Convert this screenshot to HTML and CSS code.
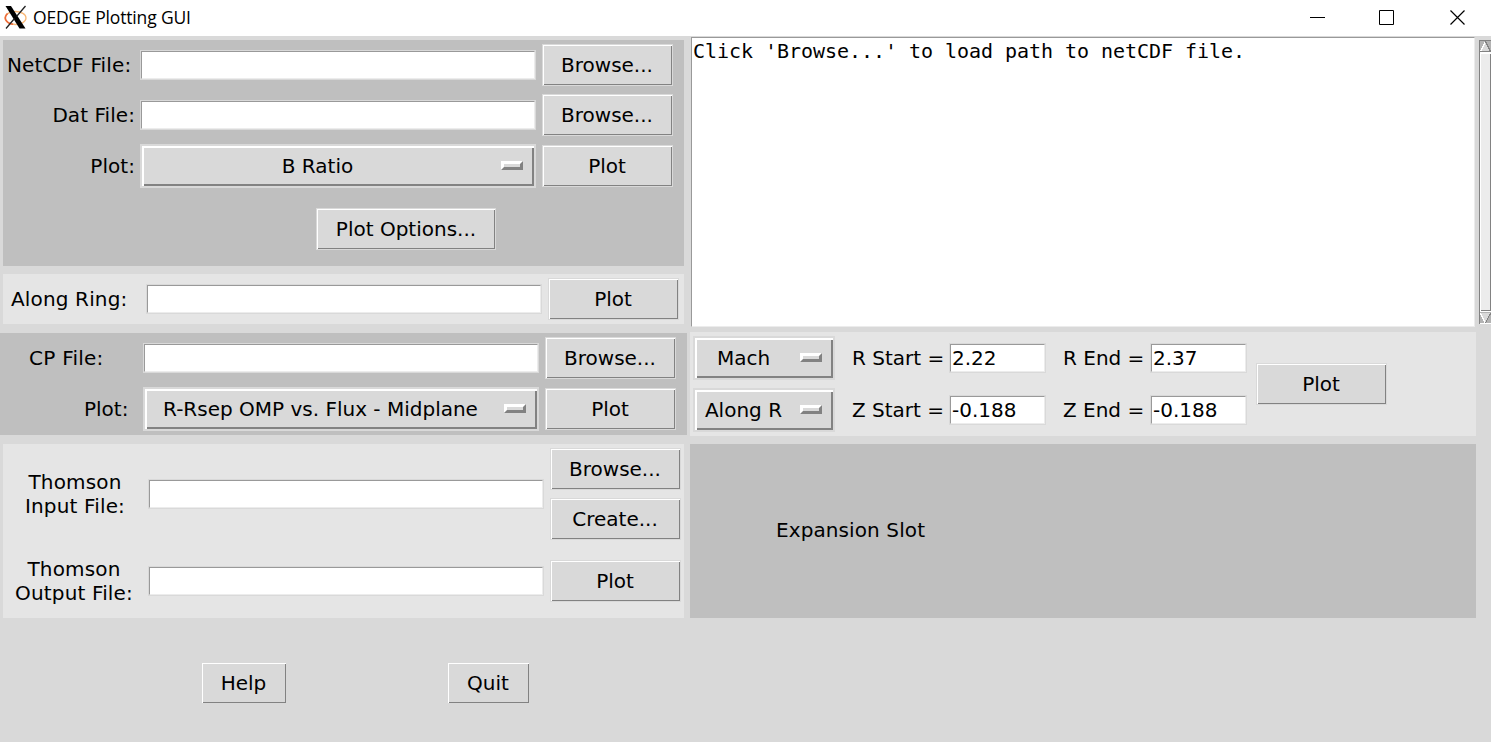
FILE: index.html
```html
<!DOCTYPE html>
<html lang="en">
<head>
<meta charset="utf-8">
<title>OEDGE Plotting GUI</title>
<link rel="stylesheet" href="styles.css">
</head>
<body>
<header class="titlebar">
  <svg class="logo" width="24" height="24" viewBox="0 0 24 24">
    <ellipse cx="11.500" cy="13" rx="10.500" ry="6.500" fill="none" stroke="#f9b878" stroke-width="1.300"/>
    <path d="M3.500 8.500C-1 13 2 18 9 19.300" fill="none" stroke="#ec6a3c" stroke-width="1.600"/>
    <path d="M1.500 1h5.500l14.500 22.500h-6z" fill="#000"/>
    <path d="M21.500 1L12.500 11.500M10.500 13.500L2 23.500" stroke="#222" stroke-width="1.300"/>
  </svg>
  <span class="caption">OEDGE Plotting GUI</span>
  <svg class="controls" width="156" height="16" viewBox="0 0 156 16" fill="none" stroke="#000">
    <path d="M0 7.500h15M69.500 .5h14v14h-14z"/>
    <path d="M140.500 .5l14 14M154.500 .5l-14 14" stroke-width="1.200"/>
  </svg>
</header>
<main class="content">
  <section class="left">
    <div class="panel dark files">
      <label class="netcdf">NetCDF File:</label><input class="entry"><button class="btn">Browse...</button>
      <label class="dat">Dat File:</label><input class="entry"><button class="btn">Browse...</button>
      <label class="dat">Plot:</label><div class="option"><span>B Ratio</span><i></i></div><button class="btn">Plot</button>
      <button class="btn options">Plot Options...</button>
    </div>
    <div class="panel light ring">
      <label>Along Ring:</label><input class="entry"><button class="btn">Plot</button>
    </div>
    <div class="panel dark cp">
      <label class="cpfile">CP File:</label><input class="entry"><button class="btn">Browse...</button>
      <label class="cpplot">Plot:</label><div class="option"><span>R-Rsep OMP vs. Flux - Midplane</span><i></i></div><button class="btn">Plot</button>
    </div>
    <div class="panel light thomson">
      <label class="tin">Thomson<br>Input File:</label><input class="entry">
      <div class="stack"><button class="btn">Browse...</button><button class="btn">Create...</button></div>
      <label class="tout">Thomson<br>Output File:</label><input class="entry"><button class="btn">Plot</button>
    </div>
    <div class="actions">
      <button class="btn help">Help</button><button class="btn quit">Quit</button>
    </div>
  </section>
  <section class="right">
    <div class="console">
      <div class="log">Click 'Browse...' to load path to netCDF file.</div>
      <svg class="scroll" width="12" height="285" viewBox="0 0 12 285" shape-rendering="crispEdges">
        <path fill="#b3b3b3" d="M0 0h12v285H0z"/>
        <path fill="#828282" d="M0 0h12v1H0zM0 0h1v285H0z"/>
        <path fill="#d9d9d9" d="M6.500 1L12 12H1z"/>
        <path fill="none" stroke="#fff" stroke-width="1.300" d="M1.500 11.500L6.500 1.500"/>
        <path fill="none" stroke="#828282" d="M6.500 1.500L11.500 11.500H1"/>
        <path fill="#fff" d="M1 12h11v260H1z"/>
        <path fill="#ececec" d="M2 14h9v256H2z"/>
        <path fill="#828282" d="M11 14h1v257H11zM2 270h10v1H2z"/>
        <path fill="#d9d9d9" d="M1 273h11L6.500 283z"/>
        <path fill="none" stroke="#fff" stroke-width="1.300" d="M1.500 273.500L6.500 283"/>
        <path fill="none" stroke="#828282" d="M6.500 283L11.500 273.500"/>
        <path fill="#fff" d="M1 283h11v1H1z"/>
        <path fill="#d9d9d9" d="M0 284h12v1H0z"/>
      </svg>
    </div>
    <div class="panel light probe">
      <div class="option"><span>Mach</span><i></i></div>
      <label class="start">R Start =</label><input class="entry" value="2.22">
      <label class="end">R End =</label><input class="entry" value="2.37">
      <button class="btn plot">Plot</button>
      <div class="option"><span>Along R</span><i></i></div>
      <label class="start">Z Start =</label><input class="entry" value="-0.188">
      <label class="end">Z End =</label><input class="entry" value="-0.188">
    </div>
    <div class="panel dark expansion">Expansion Slot</div>
  </section>
</main>
</body>
</html>
```
FILE: styles.css
```css
* { box-sizing: border-box; }
body {
  margin: 0;
  width: 1491px;
  height: 742px;
  overflow: hidden;
  background: #d9d9d9;
  color: #000;
  font: 20px/24px "DejaVu Sans", sans-serif;
}
.titlebar {
  display: flex;
  height: 36px;
  background: #fff;
  padding-left: 4px;
}
.logo { margin-top: 5px; flex: none; }
.caption {
  margin-left: 5px;
  font: 17.500px/35px "Open Sans", sans-serif;
  letter-spacing: -0.150px;
  white-space: nowrap;
}
.controls { margin: 10px 25px 0 auto; flex: none; }

.content { display: flex; gap: 3px; }
.left { width: 687px; padding-top: 4px; flex: none; }
.right { width: 801px; flex: none; }

.panel { display: grid; align-items: center; align-content: start; }
.dark { background: #bfbfbf; }
.light { background: #e5e5e5; }
label { white-space: nowrap; }

.entry {
  width: 100%;
  height: 28px;
  margin: 0;
  padding: 0 1px;
  border: 1px solid;
  border-color: #999 #ececec #ececec #999;
  border-radius: 0;
  outline: 1px solid #d9d9d9;
  outline-offset: 0;
  background: #fff;
  color: #000;
  font: inherit;
}
.btn {
  height: 42px;
  margin: 0;
  padding: 0 1px 0 0;
  border: 1px solid #d9d9d9;
  border-radius: 0;
  background: #d9d9d9;
  box-shadow: inset 1px 1px #fff, inset -1px -1px #828282;
  color: #000;
  font: inherit;
}
.option {
  display: flex;
  align-items: center;
  height: 44px;
  padding-right: 11px;
  border: 2px solid #d9d9d9;
  background: #d9d9d9;
  box-shadow: inset 2px 2px #fff, inset -2px -2px #828282;
}
.option span { flex: 1; padding-right: 8px; text-align: center; white-space: nowrap; }
.option i {
  width: 22px;
  height: 9px;
  margin-bottom: 1px;
  border: solid;
  border-width: 3px;
  border-color: #fff #828282 #828282 #fff;
}

.files, .ring, .thomson { width: 681px; margin-left: 3px; }
.files .entry, .ring .entry, .cp .entry, .thomson .entry { width: 394px; margin: 0 1px; }

.files {
  height: 226px;
  grid-template-columns: 137px 396px 131px;
  grid-template-rows: 42px 42px 44px 42px;
  gap: 8px 0;
  padding-top: 4px;
}
.files .btn, .ring .btn, .cp .btn { margin-left: 6px; width: 131px; }
.netcdf { padding-left: 4px; letter-spacing: 0.150px; }
.dat { padding-right: 5px; text-align: right; letter-spacing: 0.060px; }
.files .options { grid-column: 2; width: 180px; margin: 12px 0 0 176px; padding: 0; align-self: start; }

.ring {
  height: 50px;
  margin-top: 8px;
  padding-top: 4px;
  grid-template-columns: 143px 396px 137px;
}
.ring label { padding-left: 8px; letter-spacing: 0.150px; }

.cp {
  height: 102px;
  margin-top: 9px;
  padding-top: 4px;
  grid-template-columns: 143px 396px 137px;
  grid-template-rows: 42px 44px;
  row-gap: 8px;
}
.cpfile { padding-left: 29px; letter-spacing: 0.250px; }
.cpplot { padding-left: 84px; }

.thomson {
  height: 174px;
  margin-top: 9px;
  padding-top: 4px;
  grid-template-columns: 145px 396px 137px;
  row-gap: 17px;
}
.stack { display: grid; gap: 8px; }
.thomson .btn { margin-left: 6px; width: 131px; }
.thomson label { text-align: center; letter-spacing: 0.150px; }
.tin { padding-right: 1px; }
.tout { padding-right: 3px; }

.actions { display: flex; gap: 160px; padding: 44px 0 0 201px; }
.help { width: 86px; }
.quit { width: 83px; }

.console { display: flex; height: 296px; padding-top: 1px; }
.log {
  width: 784px;
  height: 290px;
  margin-left: 1px;
  padding: 1px;
  border: 1px solid;
  border-color: #999 #ececec #ececec #999;
  background: #fff;
  font-family: "DejaVu Sans Mono", monospace;
  letter-spacing: -0.041px;
}
.scroll { margin: 3px 0 0 4px; flex: none; }

.probe {
  width: 786px;
  height: 104px;
  padding: 4px 0 0 3px;
  grid-template-columns: 142px 115px 95px 106px 95px 140px;
  grid-template-rows: 44px 44px;
  row-gap: 8px;
}
.start { padding-left: 17px; }
.end { padding-left: 18px; }
.probe .plot { grid-row: 1 / 3; grid-column: 6; width: 131px; margin-left: 10px; }

.expansion {
  width: 786px;
  height: 174px;
  margin-top: 8px;
  padding: 0 0 2px 86px;
  align-content: center;
  letter-spacing: 0.100px;
}
```
